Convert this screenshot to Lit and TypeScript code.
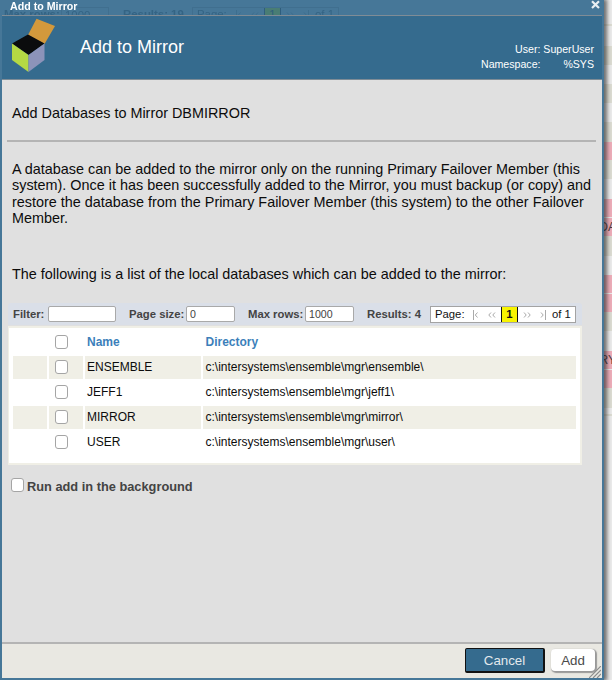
import { LitElement, html, css, svg } from "lit";
import { customElement, state } from "lit/decorators.js";

interface Database {
  name: string;
  directory: string;
}

const ROOT = "c:\\intersystems\\ensemble\\mgr\\";

// Rows of the page behind the dialog: height, kind, visible text.
const BACKDROP: [number, string, string?][] = [
  [24, "light"], [2, "tan"], [20, "light"], [19, "tan"], [19, "light"],
  [19, "tan"], [19, "light"], [20, "tan"], [18, "pink"], [19, "tan"],
  [20, "light"], [18, "pink"], [1, "light"], [18, "pink", "DA"], [20, "tan"],
  [19, "light"], [18, "pink"], [1, "light"], [18, "pink"], [19, "tan"],
  [20, "light"], [18, "pink", "RY"], [1, "light"], [18, "pink"], [20, "tan"],
  [6, "light"], [2, "tan"],
];

@customElement("app-root")
export class AppRoot extends LitElement {
  static styles = css`
    :host {
      display: block;
      position: relative;
      width: 612px;
      height: 680px;
      overflow: hidden;
      background: #ebebeb;
      font-family: "Liberation Sans", Arial, sans-serif;
      color: #0c0c0c;
    }
    * { box-sizing: border-box; }
    .backdrop {
      position: absolute;
      right: 0;
      top: 0;
      width: 8px;
      height: 680px;
      background: #ebebeb;
    }
    .band {
      display: flex;
      justify-content: flex-end;
      font-size: 12px;
      line-height: 18px;
      white-space: nowrap;
      color: #4a3a3e;
    }
    .band span { margin-right: -4px; }
    .light { background: #ebebeb; }
    .tan { background: #dcdcd2; }
    .pink { background: #edadb9; }
    .dialog {
      position: relative;
      width: 604px;
      height: 680px;
      display: flex;
      flex-direction: column;
      border: 2px solid #467798;
      border-top: 0;
      background: #e0e0e0;
      box-shadow: 2px 0 4px 1px rgba(40, 40, 40, 0.65);
    }
    .titlebar {
      position: relative;
      height: 15px;
      flex: none;
      overflow: hidden;
      background: #467798;
      display: flex;
      justify-content: space-between;
      padding: 0 1px 0 8px;
      color: #fff;
      font-size: 10.67px;
      font-weight: bold;
      line-height: 12px;
    }
    .ghost {
      position: absolute;
      left: 0;
      top: 7px;
      height: 16px;
      display: flex;
      padding-left: 2px;
      font-size: 11.4px;
      line-height: 15px;
      color: #2f5e7e;
      opacity: 0.75;
      white-space: nowrap;
    }
    .ghost .label { width: 57px; }
    .ghost .rows { width: 48px; border: 1px solid #3f6d8c; font-weight: normal; padding-left: 3px; line-height: 14px; }
    .ghost .res { margin-left: 14px; width: 69px; }
    .ghost .page { display: flex; border: 1px solid #3f6d8c; padding-left: 4px; width: 147px; font-weight: normal; line-height: 13px; }
    .ghost .page .lbl { width: 37px; }
    .ghost .page .arrows { stroke: #3b6b8b; margin-top: -1px; }
    .ghost .page .cur { width: 17px; text-align: center; background: #4b7f68; border: 1px solid #285674; border-width: 0 1px; color: #285674; }
    .ghost .page .of { margin-left: 4px; }
    .name { position: relative; }
    .close { position: relative; width: 11px; height: 11px; display: block; }
    .header {
      height: 65px;
      flex: none;
      display: flex;
      border-top: 1px solid #7f8c96;
      border-bottom: 1px solid #7f8c96;
      background: #356b8e;
      color: #fff;
    }
    .logo { width: 54px; height: 60px; margin: 1px 0 0 0; flex: none; }
    .header h1 {
      flex: 1;
      margin: 20px 0 0 24px;
      font-size: 18px;
      font-weight: normal;
      line-height: 22px;
    }
    .who {
      width: 113px;
      margin: 26px 8px 0 0;
      font-size: 10.6px;
      line-height: 14.5px;
    }
    .who div { display: flex; justify-content: space-between; white-space: nowrap; }
    .who .user { justify-content: flex-end; }
    .content { flex: 1; padding: 0 6px; }
    .content h2 {
      margin: 0 0 0 -1px;
      padding: 25px 5px 18px;
      border-bottom: 2px solid #b4b4b4;
      font-size: 14.4px;
      font-weight: normal;
      line-height: 17px;
    }
    .content p {
      margin: 0 4px;
      font-size: 14.4px;
      line-height: 16.5px;
      white-space: nowrap;
    }
    .intro { padding-top: 18.5px; }
    .lead { padding-top: 39.5px; }
    .toolbar {
      display: flex;
      align-items: center;
      width: 574px;
      height: 22px;
      margin-top: 20px;
      padding: 1px 0 0 5px;
      border-radius: 3px 3px 0 0;
      background: #dadfe8;
      font-size: 11.3px;
      font-weight: bold;
      color: #444;
      white-space: nowrap;
    }
    .toolbar .label { flex: none; }
    .l-filter { width: 35px; }
    .l-size { width: 57px; }
    .l-max { width: 57px; }
    .l-results { width: 63px; }
    .field {
      flex: none;
      height: 16px;
      border: 1px solid #a9a9a9;
      border-radius: 2px;
      background: #fff;
      padding-left: 3px;
      font-weight: normal;
      line-height: 14px;
      font-size: 10.6px;
      color: #444;
    }
    .filter { width: 68px; margin-right: 13px; }
    .size { width: 49px; margin-right: 13px; }
    .max { width: 49px; margin-right: 13px; }
    .pager {
      display: flex;
      width: 146px;
      height: 17px;
      flex: none;
      border: 1px solid #a3a3a3;
      background: #fff;
      padding-left: 4px;
      font-weight: normal;
      line-height: 15px;
      color: #111;
    }
    .pager .lbl { width: 36px; }
    .arrows { display: block; width: 30px; height: 15px; flex: none; stroke: #aaa; }
    .current {
      width: 17px;
      border: solid #111;
      border-width: 0 1px;
      background: #f8f400;
      text-align: center;
      font-weight: bold;
    }
    .pager .of { margin-left: 4px; }
    .panel {
      width: 574px;
      height: 139px;
      margin-top: 1px;
      border: 2px solid #f0efe6;
      border-left-width: 1px;
      background: #fff;
      padding: 3px 2px 0 4px;
    }
    .row {
      display: grid;
      grid-template-columns: 34px 34px 116px 373px;
      column-gap: 2px;
      height: 23px;
      margin-bottom: 2px;
      font-size: 12px;
      line-height: 23px;
    }
    .row > div { padding-left: 2px; }
    .row > .path { padding-left: 2.5px; }
    .row > .pick { display: flex; align-items: center; padding-left: 6px; }
    .striped > div { background: #f0efe6; }
    .head { color: #3c7fba; font-weight: bold; }
    .check {
      width: 13px;
      height: 14px;
      display: block;
      border: 1px solid #a5a5a5;
      border-radius: 3px;
      background: #fff;
    }
    .check.on { background: #356b8e; }
    .background {
      display: flex;
      align-items: center;
      gap: 3px;
      margin: 14px 0 0 3px;
      font-size: 12.8px;
      line-height: 15px;
      font-weight: bold;
      color: #444;
    }
    .background .check { margin-top: -3px; }
    .footer {
      height: 36px;
      flex: none;
      display: flex;
      justify-content: flex-end;
      gap: 6px;
      padding: 4px 7px 0;
      border-top: 2px solid #b4b4b4;
      background: #e9e8e2;
      position: relative;
    }
    button {
      height: 25px;
      padding: 0;
      font: 13.33px/21px "Liberation Sans", Arial, sans-serif;
    }
    .cancel { width: 80px; border: 2px solid #111; border-top-width: 1px; border-left-width: 1px; border-radius: 2px; background: #356b8e; color: #e3e9ed; }
    .add { width: 44px; height: 22px; margin-top: 1px; border: 0; border-radius: 4px; background: #fff; color: #4a4a4a; box-shadow: 1px 1px 1px 1px #999; }
    .grip { position: absolute; right: 1px; bottom: 0; width: 12px; height: 12px; }
  `;

  @state() private picked = new Set<string>();

  private databases: Database[] = [
    { name: "ENSEMBLE", directory: ROOT + "ensemble\\" },
    { name: "JEFF1", directory: ROOT + "jeff1\\" },
    { name: "MIRROR", directory: ROOT + "mirror\\" },
    { name: "USER", directory: ROOT + "user\\" },
  ];

  private toggle(key: string) {
    const next = new Set(this.picked);
    if (!next.delete(key)) next.add(key);
    this.picked = next;
  }

  private check(key: string) {
    return html`<span
      class="check ${this.picked.has(key) ? "on" : ""}"
      role="checkbox"
      aria-checked=${this.picked.has(key)}
      @click=${() => this.toggle(key)}
    ></span>`;
  }

  private arrows(forward: boolean) {
    const left = svg`<path d="M2.5 3v10M6.500 5.500L4.300 8l2.200 2.500M20 5.500L17.800 8l2.200 2.500M24 5.500L21.800 8l2.200 2.500"/>`;
    const right = svg`<path d="M6 5.500L8.200 8 6 10.500M10 5.500L12.200 8l-2.200 2.500M23 5.500L25.200 8 23 10.500M27.500 3v10"/>`;
    return html`<svg class="arrows" viewBox="0 0 30 15" fill="none">${forward ? right : left}</svg>`;
  }

  render() {
    return html`
      <div class="backdrop">
        ${BACKDROP.map(
          ([h, kind, text]) => html`<div class="band ${kind}" style="height:${h}px">${text ? html`<span>${text}</span>` : ""}</div>`
        )}
      </div>
      <div class="dialog">
        <div class="titlebar">
          <div class="ghost">
            <span class="label">Max rows:</span><span class="rows">1000</span>
            <span class="res">Results: 19</span>
            <div class="page">
              <span class="lbl">Page:</span>${this.arrows(false)}<span class="cur">1</span>${this.arrows(true)}<span class="of">of 1</span>
            </div>
          </div>
          <span class="name">Add to Mirror</span>
          <svg class="close" viewBox="0 0 11 11" stroke="#e8eef2" stroke-width="2.200"><path d="M2 1.200L9 8M9 1.200L2 8" /></svg>
        </div>
        <div class="header">
          <svg class="logo" viewBox="2 17 54 60">
            <path d="M36.500 18.700L55 26 44.500 44 28 35z" fill="#d3993c" />
            <path d="M12 43.500L28 34.500 44.500 43.500 28.500 55z" fill="#0b0c0d" />
            <path d="M12 43.500L28.500 55V72L12 60z" fill="#b5d944" />
            <path d="M28.500 55L44.500 43.500V60L28.500 72z" fill="#8c93b9" />
          </svg>
          <h1>Add to Mirror</h1>
          <div class="who">
            <div class="user">User: SuperUser</div>
            <div><span>Namespace:</span><span>%SYS</span></div>
          </div>
        </div>
        <div class="content">
          <h2>Add Databases to Mirror DBMIRROR</h2>
          <p class="intro">
            A database can be added to the mirror only on the running Primary Failover Member (this<br />
            system). Once it has been successfully added to the Mirror, you must backup (or copy) and<br />
            restore the database from the Primary Failover Member (this system) to the other Failover<br />
            Member.
          </p>
          <p class="lead">The following is a list of the local databases which can be added to the mirror:</p>
          <div class="toolbar">
            <span class="label l-filter">Filter:</span><div class="field filter"></div>
            <span class="label l-size">Page size:</span><div class="field size">0</div>
            <span class="label l-max">Max rows:</span><div class="field max">1000</div>
            <span class="label l-results">Results: 4</span>
            <div class="pager">
              <span class="lbl">Page:</span>${this.arrows(false)}<span class="current">1</span>${this.arrows(true)}<span class="of">of 1</span>
            </div>
          </div>
          <div class="panel">
            <div class="row head">
              <div></div>
              <div class="pick">${this.check("*")}</div>
              <div>Name</div>
              <div class="path">Directory</div>
            </div>
            ${this.databases.map(
              (db, i) => html`<div class="row ${i % 2 ? "" : "striped"}">
                <div></div>
                <div class="pick">${this.check(db.name)}</div>
                <div>${db.name}</div>
                <div class="path">${db.directory}</div>
              </div>`
            )}
          </div>
          <div class="background">${this.check("background")}<span>Run add in the background</span></div>
        </div>
        <div class="footer">
          <button class="cancel">Cancel</button>
          <button class="add">Add</button>
          <svg class="grip" viewBox="0 0 12 12" stroke="#8c8c8c" stroke-width="1.200"><path d="M0 12L12 0M4 12l8-8M8 12l4-4" /></svg>
        </div>
      </div>
    `;
  }
}
